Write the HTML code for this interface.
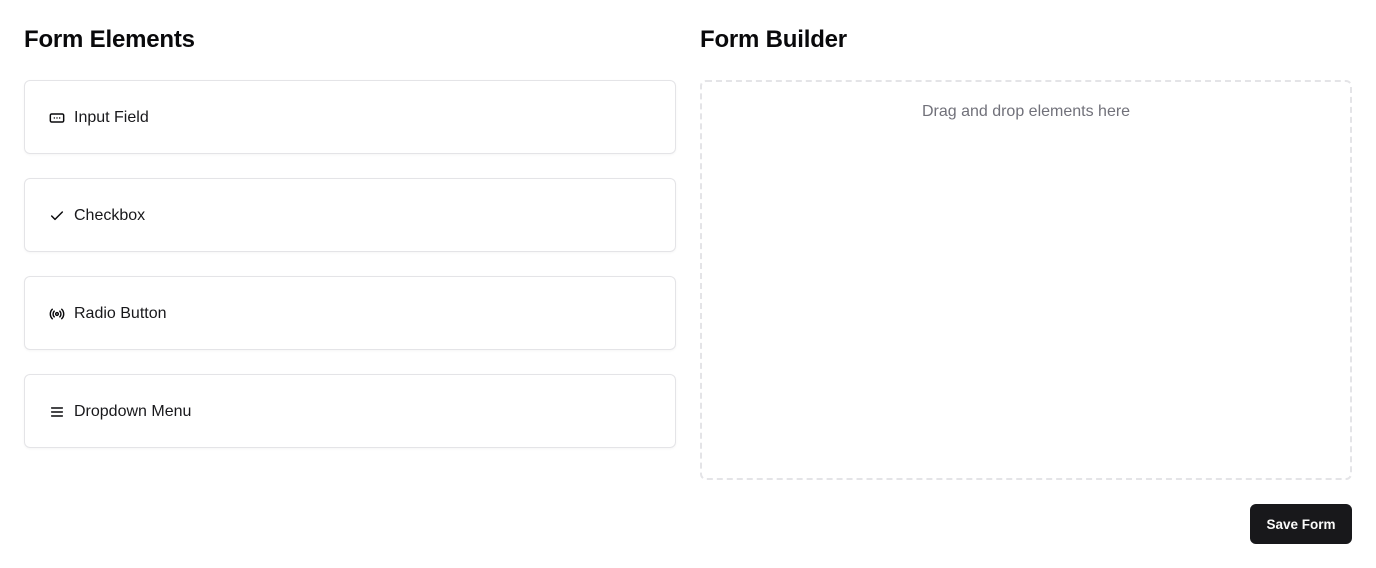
<!DOCTYPE html>
<html><head><style>
*{box-sizing:border-box;margin:0;padding:0}
body{width:1376px;height:568px;background:#fff;font-family:"Liberation Sans",sans-serif;color:#09090b;position:relative;overflow:hidden}
h2{position:absolute;top:26px;font-size:24px;font-weight:700;line-height:28px;letter-spacing:-0.2px}
.card{position:absolute;left:24px;width:652px;height:74px;border:1px solid #e4e4e7;border-radius:6px;box-shadow:0 1px 2px rgba(0,0,0,.04);display:flex;align-items:center;padding-left:24px;padding-top:2px;font-size:16px;color:#18181b}
.card svg{width:16px;height:16px;margin-right:9px;stroke:#09090b;fill:none;stroke-width:2.2;stroke-linecap:round;stroke-linejoin:round}
.drop{position:absolute;left:700px;top:80px;width:652px;height:400px;border:2px dashed #e4e4e7;border-radius:6px;text-align:center;color:#71717a;font-size:16px;padding-top:21px}
.btn{position:absolute;left:1250px;top:504px;width:102px;height:40px;background:#18181b;color:#fafafa;border-radius:6px;font-size:13.5px;font-weight:700;display:flex;align-items:center;justify-content:center}
</style></head><body>
<h2 style="left:24px">Form Elements</h2>
<h2 style="left:700px">Form Builder</h2>
<div class="card" style="top:80px"><svg viewBox="0 0 24 24"><rect x="2" y="6" width="20" height="12" rx="2"/><path d="M8 12h.01M12 12h.01M16 12h.01"/></svg>Input Field</div>
<div class="card" style="top:178px"><svg viewBox="0 0 24 24"><path d="M20 6 9 17l-5-5"/></svg>Checkbox</div>
<div class="card" style="top:276px"><svg viewBox="0 0 24 24"><path d="M4.9 19.1C1 15.2 1 8.8 4.9 4.9M7.8 16.2c-2.3-2.3-2.3-6.1 0-8.5M16.2 7.8c2.3 2.3 2.3 6.1 0 8.5M19.1 4.9C23 8.8 23 15.1 19.1 19"/><circle cx="12" cy="12" r="2"/></svg>Radio Button</div>
<div class="card" style="top:374px"><svg viewBox="0 0 24 24"><path d="M4 6h16M4 12h16M4 18h16"/></svg>Dropdown Menu</div>
<div class="drop">Drag and drop elements here</div>
<div class="btn">Save Form</div>
</body></html>
